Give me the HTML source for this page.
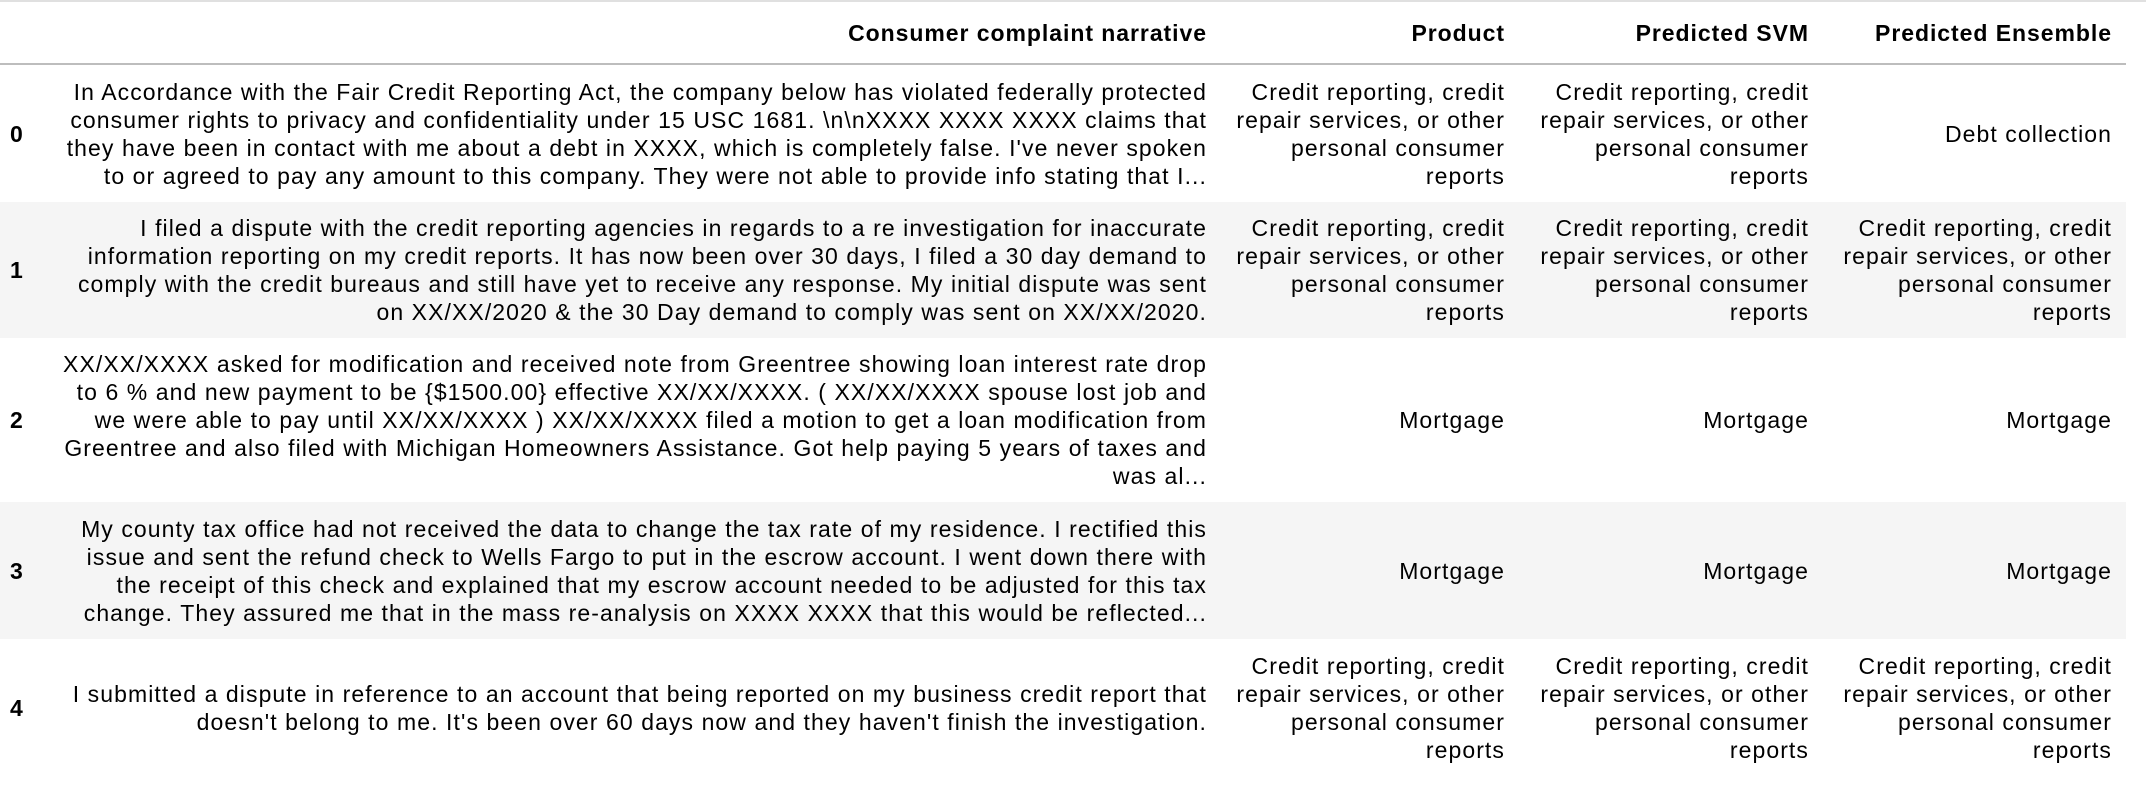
<!DOCTYPE html>
<html><head><meta charset="utf-8"><style>
html,body{margin:0;padding:0;background:#fff;width:2146px;height:796px;overflow:hidden}
body{font-family:"Liberation Sans",Arial,sans-serif;font-size:23px;letter-spacing:1.08px;color:#000}
th{letter-spacing:0.95px}
.top{position:absolute;left:0;top:0;width:2146px;height:2px;background:#e0e0e0}
table{position:absolute;left:0;top:2px;border-collapse:collapse;table-layout:fixed;width:2126px}
td,th{padding:0 14px;text-align:right;vertical-align:middle;line-height:28px;white-space:nowrap}
th{font-weight:bold;height:61px;border-bottom:2px solid #bdbdbd}
th.i,td.i{padding:0 0 0 10px;text-align:left;font-weight:bold;letter-spacing:0}
tr.g td{background:#f5f5f5}
tr.r0 td{height:137px}
tr.r1 td{height:136px}
tr.r2 td{height:164px}
tr.r3 td{height:137px}
tr.r4 td{height:137px}
</style></head><body>
<div class="top"></div>
<table>
<colgroup><col style="width:34px"><col style="width:1187px"><col style="width:298px"><col style="width:304px"><col style="width:303px"></colgroup>
<tr><th class="i"></th><th>Consumer complaint narrative</th><th>Product</th><th>Predicted SVM</th><th>Predicted Ensemble</th></tr>
<tr class="r0"><td class="i">0</td><td>In Accordance with the Fair Credit Reporting Act, the company below has violated federally protected<br>consumer rights to privacy and confidentiality under 15 USC 1681. \n\nXXXX XXXX XXXX claims that<br>they have been in contact with me about a debt in XXXX, which is completely false. I've never spoken<br>to or agreed to pay any amount to this company. They were not able to provide info stating that I...</td><td>Credit reporting, credit<br>repair services, or other<br>personal consumer<br>reports</td><td>Credit reporting, credit<br>repair services, or other<br>personal consumer<br>reports</td><td>Debt collection</td></tr>
<tr class="r1 g"><td class="i">1</td><td>I filed a dispute with the credit reporting agencies in regards to a re investigation for inaccurate<br>information reporting on my credit reports. It has now been over 30 days, I filed a 30 day demand to<br>comply with the credit bureaus and still have yet to receive any response. My initial dispute was sent<br>on XX/XX/2020 &amp; the 30 Day demand to comply was sent on XX/XX/2020.</td><td>Credit reporting, credit<br>repair services, or other<br>personal consumer<br>reports</td><td>Credit reporting, credit<br>repair services, or other<br>personal consumer<br>reports</td><td>Credit reporting, credit<br>repair services, or other<br>personal consumer<br>reports</td></tr>
<tr class="r2"><td class="i">2</td><td>XX/XX/XXXX asked for modification and received note from Greentree showing loan interest rate drop<br>to 6 % and new payment to be {$1500.00} effective XX/XX/XXXX. ( XX/XX/XXXX spouse lost job and<br>we were able to pay until XX/XX/XXXX ) XX/XX/XXXX filed a motion to get a loan modification from<br>Greentree and also filed with Michigan Homeowners Assistance. Got help paying 5 years of taxes and<br>was al...</td><td>Mortgage</td><td>Mortgage</td><td>Mortgage</td></tr>
<tr class="r3 g"><td class="i">3</td><td>My county tax office had not received the data to change the tax rate of my residence. I rectified this<br>issue and sent the refund check to Wells Fargo to put in the escrow account. I went down there with<br>the receipt of this check and explained that my escrow account needed to be adjusted for this tax<br>change. They assured me that in the mass re-analysis on XXXX XXXX that this would be reflected...</td><td>Mortgage</td><td>Mortgage</td><td>Mortgage</td></tr>
<tr class="r4"><td class="i">4</td><td>I submitted a dispute in reference to an account that being reported on my business credit report that<br>doesn't belong to me. It's been over 60 days now and they haven't finish the investigation.</td><td>Credit reporting, credit<br>repair services, or other<br>personal consumer<br>reports</td><td>Credit reporting, credit<br>repair services, or other<br>personal consumer<br>reports</td><td>Credit reporting, credit<br>repair services, or other<br>personal consumer<br>reports</td></tr>
</table>
</body></html>
